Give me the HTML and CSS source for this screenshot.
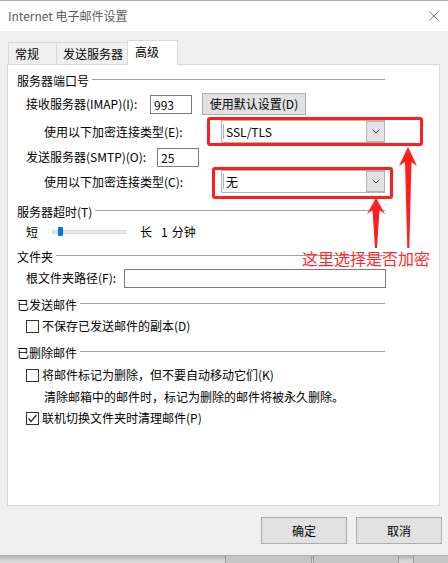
FILE: index.html
```html
<!DOCTYPE html>
<html lang="zh-CN">
<head>
  <meta charset="UTF-8" />
  <meta name="viewport" content="width=device-width, initial-scale=1.0" />
  <title>Internet 电子邮件设置</title>
  <link rel="stylesheet" href="styles.css">
</head>
<body>

<div class="screen">
  <div class="dialog">
    <div class="titlebar">
      <span class="title">Internet 电子邮件设置</span>
      <svg class="close" width="10" height="10" viewBox="0 0 10 10">
        <path d="M0.5 0.5 L9.5 9.5 M9.5 0.5 L0.5 9.5" stroke="#7a7a7a" stroke-width="1" fill="none" />
      </svg>
    </div>

    <div class="tabs">
      <div class="tab tab-general">常规</div>
      <div class="tab tab-send">发送服务器</div>
      <div class="tab tab-adv active">高级</div>
    </div>

    <div class="panel">
      <div class="group-title mt8"><span>服务器端口号</span><i class="rule"></i></div>

      <div class="row h22 mt4">
        <span class="lbl w-imap">接收服务器(IMAP)(I):</span>
        <div class="textbox port">993</div>
        <button class="btn btn-default">使用默认设置(D)</button>
      </div>

      <div class="row sub h23 mt5">
        <span class="lbl w-enc">使用以下加密连接类型(E):</span>
        <div class="combo">
          <i class="cursor"></i>
          <span class="value">SSL/TLS</span>
          <span class="drop">
            <svg width="8" height="5" viewBox="0 0 8 5"><path d="M0.5 0.5 L4 4 L7.5 0.5" stroke="#444" stroke-width="1" fill="none" /></svg>
          </span>
        </div>
      </div>

      <div class="row h20 mt4">
        <span class="lbl w-smtp">发送服务器(SMTP)(O):</span>
        <div class="textbox port">25</div>
      </div>

      <div class="row sub h23 mt3">
        <span class="lbl w-enc">使用以下加密连接类型(C):</span>
        <div class="combo">
          <i class="cursor"></i>
          <span class="value">无</span>
          <span class="drop">
            <svg width="8" height="5" viewBox="0 0 8 5"><path d="M0.5 0.5 L4 4 L7.5 0.5" stroke="#444" stroke-width="1" fill="none" /></svg>
          </span>
        </div>
      </div>

      <div class="group-title mt11"><span>服务器超时(T)</span><i class="rule"></i></div>

      <div class="row h16 mt4">
        <span>短</span>
        <div class="slider"><i class="thumb"></i></div>
        <span class="long">长</span><span class="num">1</span><span class="unit">分钟</span>
      </div>

      <div class="group-title mt9"><span>文件夹</span><i class="rule"></i></div>

      <div class="row h20 mt3">
        <span class="lbl w-root">根文件夹路径(F):</span>
        <div class="textbox path"></div>
      </div>

      <div class="group-title mt9"><span>已发送邮件</span><i class="rule"></i></div>

      <div class="row h16 mt5">
        <span class="check"></span>
        <span class="check-text">不保存已发送邮件的副本(D)</span>
      </div>

      <div class="group-title mt11"><span>已删除邮件</span><i class="rule"></i></div>

      <div class="row h16 mt6">
        <span class="check"></span>
        <span class="check-text">将邮件标记为删除，但不要自动移动它们(K)</span>
      </div>

      <div class="row sub h16 mt6">
        <span>清除邮箱中的邮件时，标记为删除的邮件将被永久删除。</span>
      </div>

      <div class="row h16 mt5">
        <span class="check checked">
          <svg width="11" height="11" viewBox="0 0 11 11"><path d="M1.5 5.5 L4 8.5 L9.5 2" stroke="#222" stroke-width="1.2" fill="none" /></svg>
        </span>
        <span class="check-text">联机切换文件夹时清理邮件(P)</span>
      </div>
    </div>

    <div class="footer">
      <button class="btn btn-dialog">确定</button>
      <button class="btn btn-dialog">取消</button>
    </div>
  </div>

  <div class="behind">
    <i class="behind-btn b1"></i>
    <i class="behind-btn b2"></i>
    <i class="behind-btn b3"></i>
  </div>

  <!-- screenshot annotations -->
  <div class="mark mark-e"></div>
  <div class="mark mark-c"></div>
  <svg class="arrows" width="448" height="563" viewBox="0 0 448 563">
    <polygon points="408,147 417,166 411.5,162 409.3,248 407.3,248 405,162 399,166" fill="#ff1e1e" />
    <polygon points="376,198 385,214 379.5,210 377,248 375,248 372.5,210 367,214" fill="#ff1e1e" />
  </svg>
  <div class="note">这里选择是否加密</div>
</div>

</body>
</html>
```

FILE: styles.css
```css
body {
  margin: 0;
  font-family: "Noto Sans CJK SC", sans-serif;
  font-size: 12px;
  color: #000;
  background: #d4d4d4;
}
.screen {
  position: relative;
  width: 448px;
  height: 563px;
  overflow: hidden;
}
.dialog {
  background: #f0f0f0;
  height: 555px;
  display: flex;
  flex-direction: column;
}

/* title bar */
.titlebar {
  height: 30px;
  border-top: 1px solid #a9a9a9;
  background: white;
  display: flex;
  align-items: center;
  justify-content: space-between;
  padding: 0 9px 0 8px;
}
.titlebar .title {
  color: #5c5c5c;
  line-height: 16px;
}

/* tabs */
.tabs {
  display: flex;
  align-items: flex-end;
  height: 24px;
  margin-top: 9px;
  padding-left: 8px;
}
.tab {
  box-sizing: border-box;
  height: 22px;
  padding-top: 3px;
  line-height: 16px;
  border: 1px solid #d9d9d9;
  border-bottom: none;
  background: #f0f0f0;
}
.tab-general { width: 49px; padding-left: 6px; }
.tab-send { width: 72px; padding-left: 6px; margin-left: -1px; }
.tab-adv { width: 51px; padding-left: 7px; margin-left: -1px; }
.tab.active {
  position: relative;
  z-index: 1;
  height: 25px;
  margin-bottom: -1px;
  background: white;
}

/* tab page */
.panel {
  box-sizing: border-box;
  height: 442px;
  margin: 0 8px 0 7px;
  padding-left: 9px;
  border: 1px solid #d9d9d9;
  background: white;
}
.group-title {
  display: flex;
  align-items: center;
  width: 368px;
  height: 16px;
  line-height: 16px;
}
.group-title .rule {
  flex: 1;
  height: 1px;
  margin: 0 0 4px 3px;
  background: #a0a0a0;
}
.row {
  display: flex;
  align-items: center;
  margin-left: 9px;
  line-height: 16px;
}
.row.sub { margin-left: 27px; }
.h16 { height: 16px; }
.h20 { height: 20px; }
.h22 { height: 22px; }
.h23 { height: 23px; }
.mt3 { margin-top: 3px; }
.mt4 { margin-top: 4px; }
.mt5 { margin-top: 5px; }
.mt6 { margin-top: 6px; }
.mt8 { margin-top: 8px; }
.mt9 { margin-top: 9px; }
.mt11 { margin-top: 11px; }

.lbl { flex: none; white-space: nowrap; }
.w-imap { width: 124px; }
.w-smtp { width: 131px; }
.w-enc { width: 177px; }
.w-root { width: 98px; }

.textbox {
  box-sizing: border-box;
  height: 19px;
  border: 1px solid #7a7a7a;
  background: white;
  padding-left: 3px;
  line-height: 17px;
}
.textbox.port { width: 42px; }
.textbox.path { width: 262px; }

.btn {
  box-sizing: border-box;
  font-family: inherit;
  font-size: 12px;
  color: #000;
  background: #e1e1e1;
  border: 1px solid #adadad;
  padding: 0;
  line-height: 16px;
}
.btn-default {
  width: 104px;
  height: 22px;
  margin-left: 10px;
}

/* drop-down list */
.combo {
  box-sizing: border-box;
  width: 164px;
  height: 23px;
  border: 1px solid #b4b4b4;
  background: white;
  display: flex;
  align-items: center;
}
.combo .cursor {
  width: 1px;
  height: 15px;
  margin-left: 1px;
  background: #86b6e4;
}
.combo .value {
  flex: 1;
  padding-left: 2px;
}
.combo .drop {
  box-sizing: border-box;
  width: 19px;
  height: 21px;
  border: 1px solid #b4b4b4;
  margin-right: -1px;
  background: #e3e3e3;
  display: flex;
  align-items: center;
  justify-content: center;
}

/* slider */
.slider {
  position: relative;
  box-sizing: border-box;
  width: 74px;
  height: 4px;
  margin-left: 14px;
  background: #e7eaea;
  border: 1px solid #d6d6d6;
}
.slider .thumb {
  position: absolute;
  left: 5px;
  top: -4px;
  width: 5px;
  height: 9px;
  border-radius: 1px;
  background: #0078d7;
}
.long { margin-left: 14px; }
.num { margin-left: 9px; }
.unit { margin-left: 4px; }

/* check boxes */
.check {
  box-sizing: border-box;
  flex: none;
  width: 13px;
  height: 13px;
  border: 1px solid #333;
  background: white;
  display: flex;
  align-items: center;
  justify-content: center;
}
.check-text { margin-left: 3px; }

.footer {
  display: flex;
  justify-content: flex-end;
  gap: 9px;
  padding: 11px 6px 0 0;
}
.btn-dialog {
  width: 86px;
  height: 27px;
}

/* window behind the dialog */
.behind {
  position: relative;
  height: 8px;
  background: linear-gradient(#a9a9a9, #d2d2d2 60%, #dcdcdc);
}
.behind-btn {
  position: absolute;
  top: 1px;
  height: 7px;
  background: #c6c6c6;
  border-left: 1px solid #9c9c9c;
  border-right: 1px solid #9c9c9c;
}
.b1 { left: 225px; width: 85px; }
.b2 { left: 313px; width: 84px; }
.b3 { left: 413px; width: 40px; }

/* red annotations */
.mark {
  position: absolute;
  box-sizing: border-box;
  border: 3px solid #ff1e1e;
  border-radius: 3px;
}
.mark-e { left: 207px; top: 117px; width: 216px; height: 29px; }
.mark-c { left: 212px; top: 167px; width: 181px; height: 32px; }
.arrows {
  position: absolute;
  left: 0;
  top: 0;
  pointer-events: none;
}
.note {
  position: absolute;
  left: 302px;
  top: 247px;
  font-size: 16px;
  line-height: 22px;
  color: #ff2a2a;
  white-space: nowrap;
}
```
